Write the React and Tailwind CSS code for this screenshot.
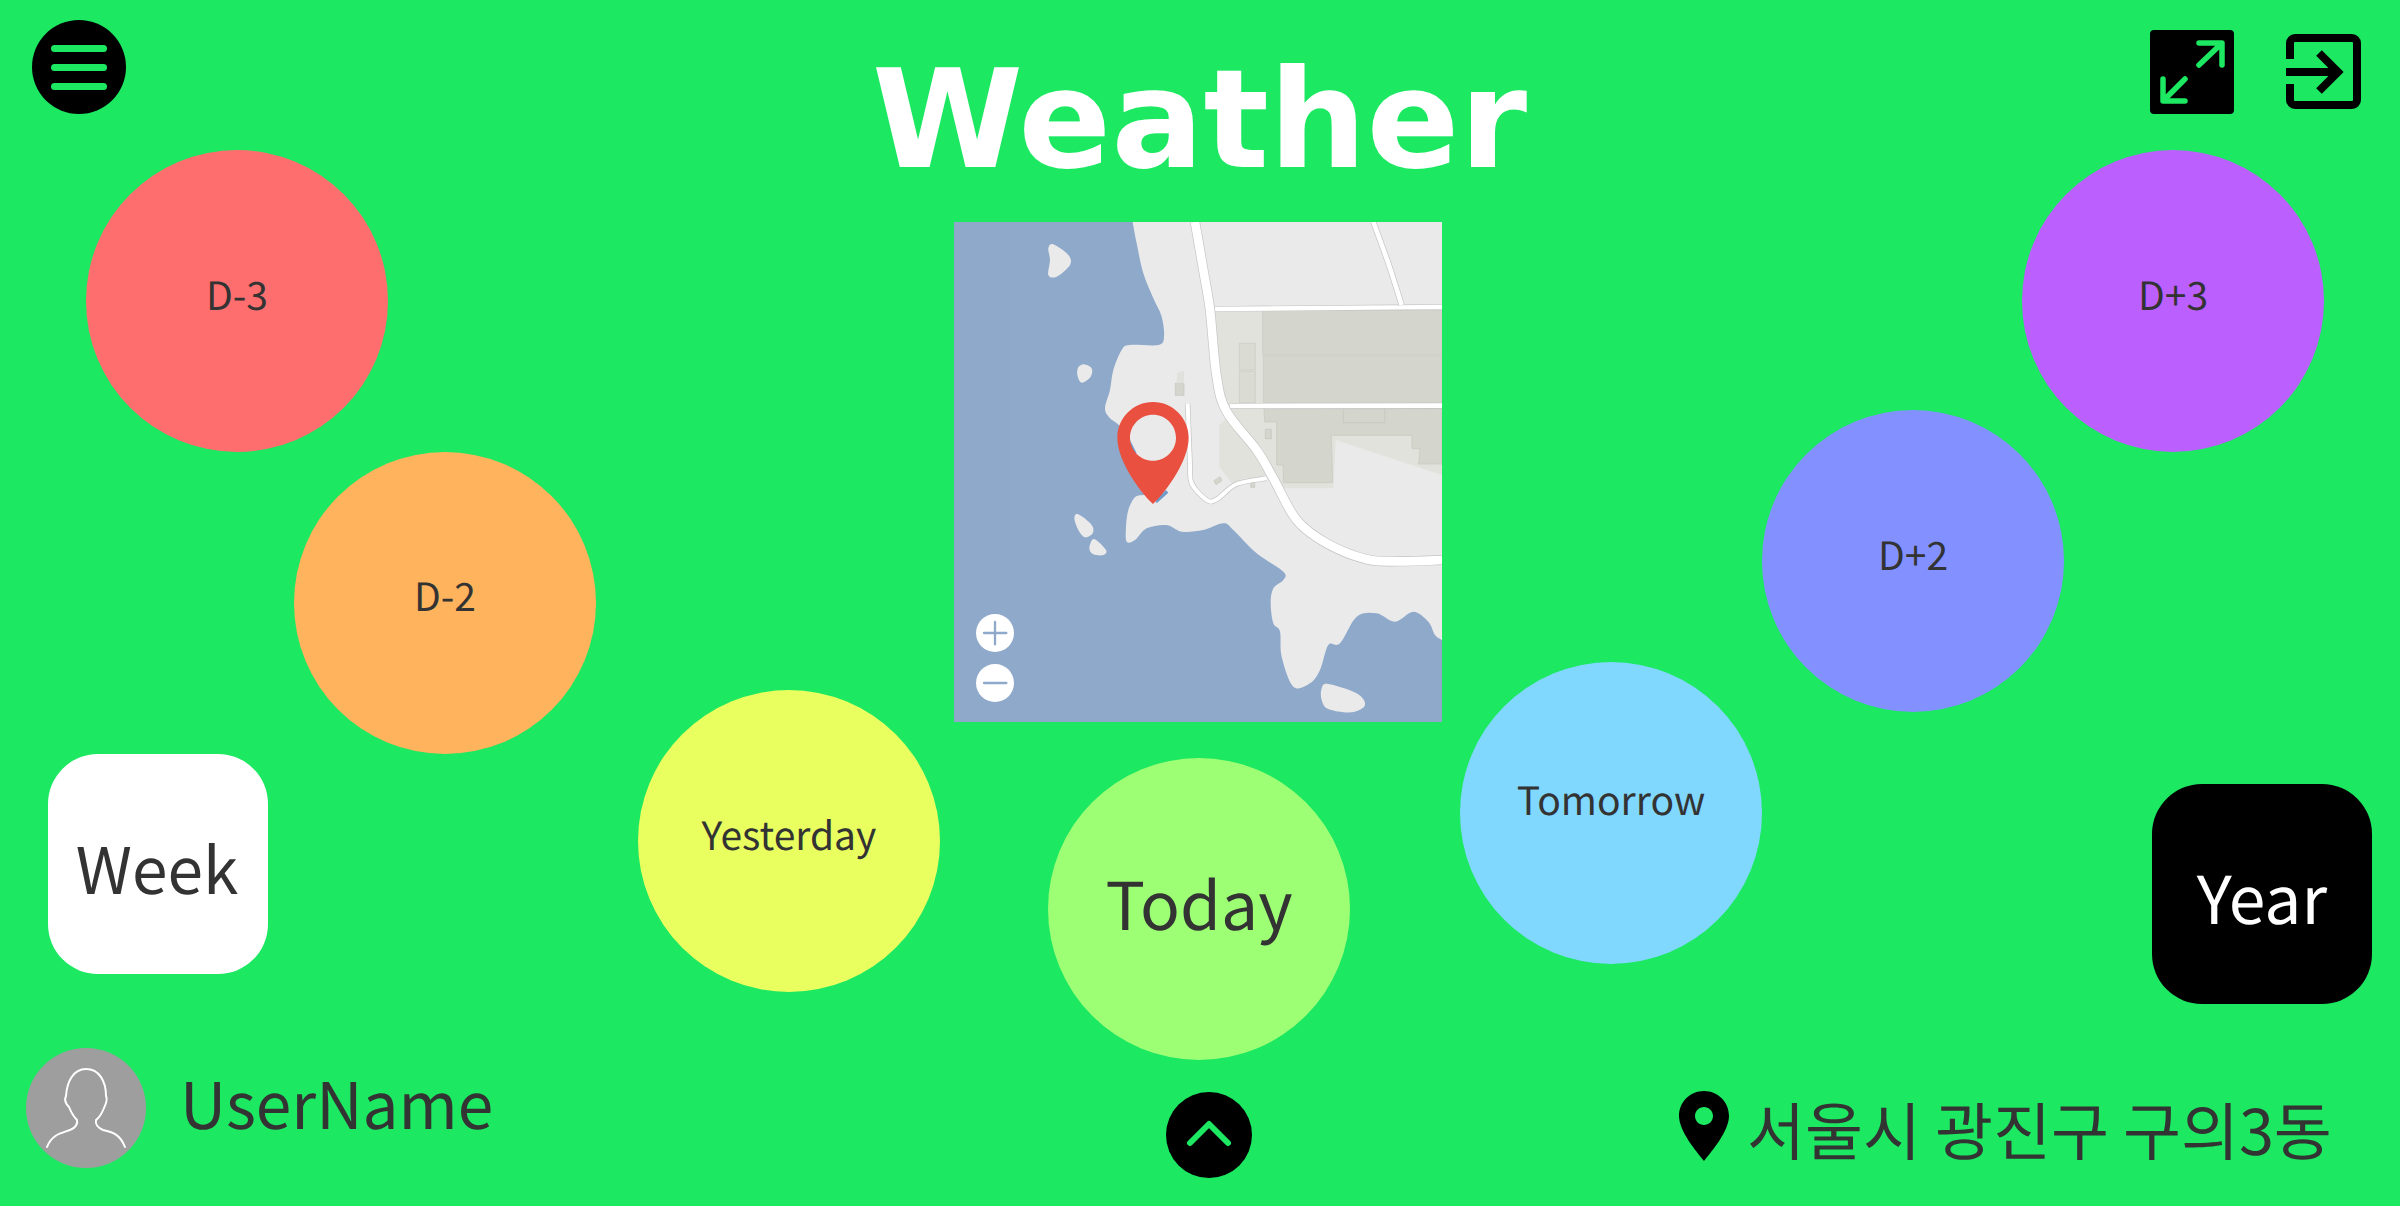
const KR = "font-['Noto_Sans_CJK_KR','Noto_Sans',sans-serif]";

function smooth(pts, closed = true) {
  const n = pts.length;
  const g = (i) => (closed ? pts[(i + n) % n] : pts[Math.max(0, Math.min(n - 1, i))]);
  let d = `M${pts[0][0]} ${pts[0][1]}`;
  const last = closed ? n : n - 1;
  for (let i = 0; i < last; i++) {
    const p0 = g(i - 1), p1 = g(i), p2 = g(i + 1), p3 = g(i + 2);
    d += `C${p1[0] + (p2[0] - p0[0]) / 6} ${p1[1] + (p2[1] - p0[1]) / 6} ${p2[0] - (p3[0] - p1[0]) / 6} ${p2[1] - (p3[1] - p1[1]) / 6} ${p2[0]} ${p2[1]}`;
  }
  return closed ? d + "Z" : d;
}

const coast = [[578,36],[590,100],[610,190],[640,265],[665,320],[672,380],[655,405],[570,405],[545,420],[520,480],[510,540],[495,595],[510,625],[540,650],[580,720],[610,800],[640,850],[610,855],[585,862],[565,900],[558,950],[560,995],[585,990],[620,955],[680,945],[725,965],[790,960],[850,940],[880,960],[950,1030],[1030,1085],[1030,1110],[1000,1135],[992,1180],[1000,1240],[1020,1265],[1025,1340],[1060,1430],[1110,1420],[1140,1380],[1165,1305],[1200,1300],[1250,1220],[1310,1210],[1365,1235],[1420,1205],[1465,1235],[1485,1275],[1506,1290]];
const landD = smooth(coast, false) + "L1506 36Z";
const islands = [
  [[340,103],[385,135],[390,165],[350,200],[325,195],[330,150],[325,115]],
  [[432,463],[455,475],[452,500],[425,518],[412,495],[415,472]],
  [[415,913],[455,945],[458,970],[435,982],[415,960],[403,925]],
  [[462,987],[498,1020],[490,1035],[460,1033],[448,1015]],
  [[1165,1422],[1250,1450],[1275,1485],[1235,1507],[1165,1497],[1145,1470],[1145,1435]],
];
const mainRoad = [[765,36],[790,180],[810,300],[830,500],[860,605],[950,720],[1000,805],[1070,930],[1160,1000],[1280,1048],[1380,1054],[1506,1050]];
const road2 = [[1300,36],[1345,160],[1385,285]];
const road3 = [[743,580],[750,760],[755,820],[800,870],[830,868],[890,822],[980,805]];

function Casing({ d, w }) {
  return (
    <>
      <path d={d} fill="none" stroke="#c4c4c4" strokeWidth={w + 4} />
      <path d={d} fill="none" stroke="#ffffff" strokeWidth={w} />
    </>
  );
}

function MapView() {
  const b = "#d4d6cd";
  return (
    <svg viewBox="42 36 1464 1500" className="block w-[488px] h-[500px]">
      <rect x="42" y="36" width="1464" height="1500" fill="#8fa9ca" />
      <path d={landD} fill="#eaeaea" />
      {islands.map((p, i) => <path key={i} d={smooth(p)} fill="#eaeaea" />)}
      <path d="M820 305L1506 300V795L1187 690L1180 835H1030L1000 800L980 800L910 805L880 825L838 770V645L875 610L850 540Z" fill="#e1e2db" />
      <path d="M968 300H1506V435H968ZM970 438H1506V578H970Z" fill={b} stroke="#c9cbc2" strokeWidth="2" />
      <path d="M898 400H946V480H898ZM898 484H946V578H898Z" fill="#dadbd3" stroke="#c9cbc2" strokeWidth="2" />
      <path d="M972 596H1506V762H1436L1440 716H1416V676H1174L1178 818H1030V765H1010V636H974Z" fill={b} stroke="#c6c8bf" strokeWidth="2" />
      <path d="M1210 596H1334V638H1210ZM976 658H994V686H976ZM706 520H732V556H706ZM822 812L840 800L846 812L828 824ZM932 816H944V832H932Z" fill={b} stroke="#c4c6bd" strokeWidth="2" />
      <path d="M712 488L732 482V520H710Z" fill="#e0e0dc" />
      <Casing d="M815 297L1372 292L1506 291" w={13} />
      <Casing d="M870 588L1506 587" w={14} />
      <Casing d={smooth(road2, false)} w={14} />
      <Casing d={smooth(road3, false)} w={12} />
      <Casing d={smooth(mainRoad, false)} w={26} />
      <path d="M650 880L685 848L678 840L645 870Z" fill="#6f9bc9" />
      <path d="M570 690L590 730L575 735Z" fill="#6f9bc9" />
      <path fillRule="evenodd" d="M639 576C580 576 532 624 532 683C532 750 595 840 639 882C683 840 746 750 746 683C746 624 698 576 639 576ZM639 614C677 614 708 645 708 683C708 721 677 752 639 752C601 752 570 721 570 683C570 645 601 614 639 614Z" fill="#e95040" />
      <circle cx="165" cy="1269" r="57" fill="#fff" />
      <circle cx="165" cy="1419" r="57" fill="#fff" />
      <path d="M132 1269H199M165 1236V1303M132 1419H199" stroke="#8fa9ca" strokeWidth="7" strokeLinecap="round" fill="none" />
    </svg>
  );
}

const bubbles = [
  { t: "D-3", x: 86, y: 150, c: "bg-[#ff6e6e] pb-[14px] text-[39px]" },
  { t: "D-2", x: 294, y: 452, c: "bg-[#ffb35c] pb-[16px] text-[39px]" },
  { t: "Yesterday", x: 638, y: 690, c: "bg-[#e8ff5f] pb-[14px] text-[39px]" },
  { t: "Today", x: 1048, y: 758, c: "bg-[#9cff74] pb-[14px] text-[66px]" },
  { t: "Tomorrow", x: 1460, y: 662, c: "bg-[#80d8ff] pb-[28px] text-[39px]" },
  { t: "D+2", x: 1762, y: 410, c: "bg-[#8291ff] pb-[14px] text-[39px]" },
  { t: "D+3", x: 2022, y: 150, c: "bg-[#bb5fff] pb-[14px] text-[39px]" },
];

export default function App() {
  return (
    <div className={`relative w-[2400px] h-[1206px] overflow-hidden bg-[#1ce862] text-[#333333] flex flex-col [text-rendering:geometricPrecision] ${KR}`}>
      {/* header */}
      <header className="h-[222px] flex items-start shrink-0">
        <button className="ml-[32px] mt-[20px] w-[94px] h-[94px] rounded-full bg-black flex flex-col items-center justify-center gap-[12px]">
          <span className="block w-[56px] h-[7px] rounded-full bg-[#1ce862]" />
          <span className="block w-[56px] h-[7px] rounded-full bg-[#1ce862]" />
          <span className="block w-[56px] h-[7px] rounded-full bg-[#1ce862]" />
        </button>
        <h1 className="ml-[746px] mt-[31px] text-white font-bold text-[137px] leading-[180px] font-['DejaVu_Sans',sans-serif] whitespace-nowrap">Weather</h1>
        <div className="ml-auto mt-[30px] mr-[39px] flex items-start gap-[52px]">
          <div className="w-[84px] h-[84px] rounded-[4px] bg-black">
            <svg viewBox="0 0 84 84" className="w-[84px] h-[84px]" fill="none" stroke="#1ce862" strokeWidth="5.5" strokeLinecap="round" strokeLinejoin="round">
              <path d="M49 13H72V35M70 15L49 35M13 49V71H35M14 70L35 49" />
            </svg>
          </div>
          <svg viewBox="0 0 75 75" className="w-[75px] h-[75px] mt-[4px]" fill="none" stroke="#000" strokeWidth="8">
            <path d="M4 25V9a5 5 0 0 1 5-5H66a5 5 0 0 1 5 5V66a5 5 0 0 1-5 5H9a5 5 0 0 1-5-5V50" />
            <path d="M0 38H52M33 19L52 38L33 57" />
          </svg>
        </div>
      </header>

      {/* map */}
      <div className="ml-[954px] w-[488px] shrink-0">
        <MapView />
      </div>

      {/* footer */}
      <footer className="mt-auto h-[158px] flex items-start shrink-0">
        <div className="w-[1166px] pl-[26px] flex items-start shrink-0">
          <div className="w-[120px] h-[120px] rounded-full bg-[#9e9e9e] overflow-hidden shrink-0">
            <svg viewBox="0 0 120 120" className="w-[120px] h-[120px]" fill="none" stroke="#fff" strokeWidth="2" strokeLinecap="round" strokeLinejoin="round">
              <path d="M21 99C26 86 36 85 44 82C50 80 52 75 51 72C47 68 45 64 43 59C40 56 38 52 40 48C41 34 47 21 60 21C73 21 80 33 80 48C82 52 80 56 78 60C76 65 74 69 70 72C69 76 72 80 77 82C86 84 94 86 99 99" />
            </svg>
          </div>
          <div className="ml-[34px] mt-[9px] text-[64px] leading-[90px] whitespace-nowrap">UserName</div>
        </div>
        <button className="mt-[44px] w-[86px] h-[86px] rounded-full bg-black shrink-0">
          <svg viewBox="0 0 86 86" className="w-[86px] h-[86px]" fill="none" stroke="#1ce862" strokeWidth="6" strokeLinecap="round" strokeLinejoin="round">
            <path d="M24 51L43 32L62 51" />
          </svg>
        </button>
        <div className="ml-[427px] mt-[43px] flex items-start">
          <svg viewBox="0 0 50 70" className="w-[50px] h-[70px] shrink-0">
            <path fillRule="evenodd" d="M25 0C11 0 0 11 0 25C0 40 17 60 25 70C33 60 50 40 50 25C50 11 39 0 25 0ZM25 16C30 16 34 20 34 25C34 30 30 34 25 34C20 34 16 30 16 25C16 20 20 16 25 16Z" fill="#000" />
          </svg>
          <span className="ml-[18px] -mt-[2px] text-[63px] leading-[80px] whitespace-nowrap">서울시 광진구 구의3동</span>
        </div>
      </footer>

      {/* free-floating day bubbles */}
      {bubbles.map((b) => (
        <div
          key={b.t}
          style={{ left: b.x, top: b.y }}
          className={`absolute w-[302px] h-[302px] rounded-full flex items-center justify-center ${b.c}`}
        >
          {b.t}
        </div>
      ))}
      <div className="absolute left-[48px] top-[754px] w-[220px] h-[220px] pt-[6px] pr-[2px] rounded-[50px] bg-white flex items-center justify-center text-[64px]">Week</div>
      <div className="absolute left-[2152px] top-[784px] w-[220px] h-[220px] pt-[4px] rounded-[50px] bg-black flex items-center justify-center text-[66px] text-white">Year</div>
    </div>
  );
}
